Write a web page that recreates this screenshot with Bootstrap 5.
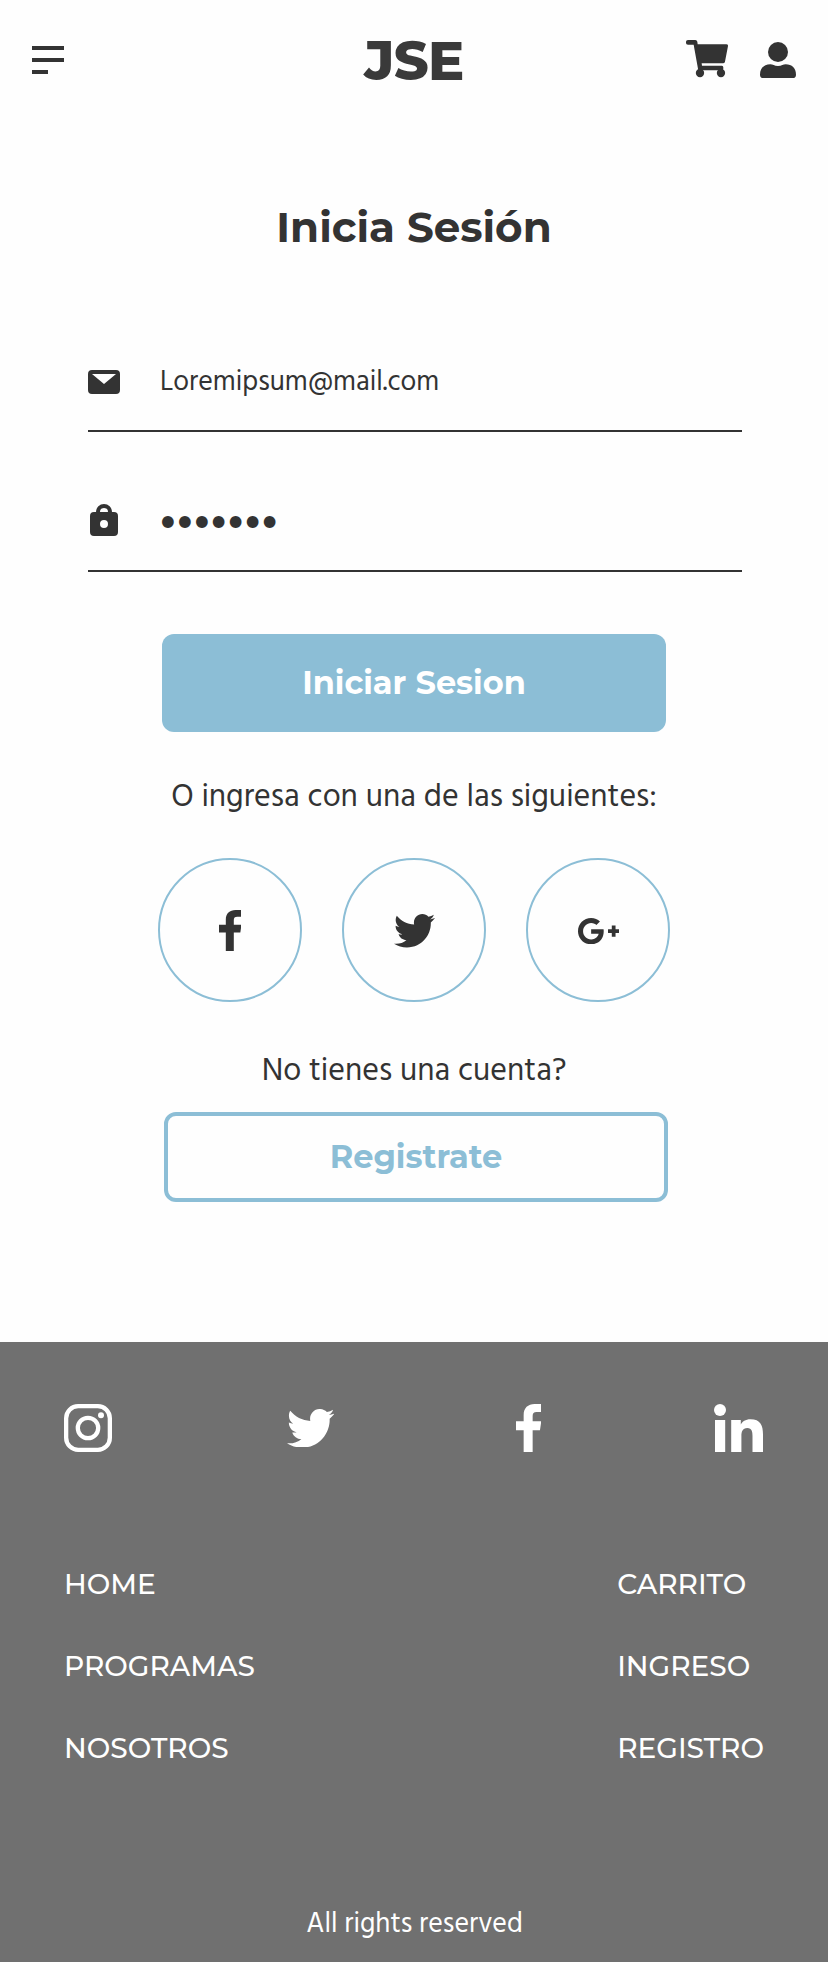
<!DOCTYPE html>
<html lang="es">
<head>
<meta charset="utf-8">
<meta name="viewport" content="width=device-width, initial-scale=1">
<title>JSE - Inicia Sesión</title>
<link href="https://cdn.jsdelivr.net/npm/bootstrap@5.3.0/dist/css/bootstrap.min.css" rel="stylesheet">
<style>
:root{--ink:#333;--sky:#8cbed6;--ash:#707070}
body{font-family:Hind,"Noto Sans",sans-serif;color:var(--ink);background:#fefefe}
svg{display:block;fill:currentColor}
a{color:inherit;text-decoration:none}
.topbar{height:120px;padding:0 32px}
.side{width:110px}
.cart{margin-top:-2px}
.brand{font:800 54px/60px Montserrat,Inter,sans-serif;letter-spacing:-.6px;color:#3a3a3a;padding-top:1px}
.heading{font:700 42px/50px Montserrat,Inter,sans-serif;margin:82px 0 0}
.field{width:654px;margin-left:2px;border-bottom:2px solid var(--ink);font-size:28px}
.field-mail{height:98px;margin-top:82px}
.field-pass{height:102px;margin-top:38px}
.glyph{width:32px;margin-right:40px}
.mail{padding-top:2px}
.dots{font-size:44px;line-height:1;letter-spacing:-2.8px;margin:14px 0 0 -2px}
.action{width:504px;border-radius:12px;font:700 32px/1 Montserrat,Inter,sans-serif;padding:0}
.action-main{height:98px;margin-top:62px;background:var(--sky);color:#fff}
.action-alt{height:90px;margin:20px 0 0 4px;border:4px solid var(--sky);color:var(--sky)}
.note{font-size:32px;line-height:40px}
.note-or{margin-top:46px}
.note-new{margin-top:50px}
.rings{margin-top:40px;gap:40px}
.ring{width:144px;height:144px;border:2px solid var(--sky)}
.nudge{padding:2px 0 0 1px}
.foot{margin-top:140px;padding:62px 64px 17px;background:var(--ash);height:620px}
.social{height:48px}
.s-tw{margin-left:174.7px}
.s-fb{margin-left:181.5px}
.s-in{margin-left:173px}
.links{margin-top:91px;font:500 28px/82px Montserrat,Inter,sans-serif}
.copy{margin-top:116px;padding-left:1px;font-size:28px;line-height:40px}
</style>
</head>
<body>
<header class="topbar d-flex align-items-center justify-content-between">
  <a href="#" class="side" aria-label="Menú"><svg width="32" height="28"><path d="M0 0h32v4H0zM0 12h32v4H0zM0 24h16v4H0z"/></svg></a>
  <a href="#" class="brand">JSE</a>
  <div class="side d-flex justify-content-between align-items-center">
    <a href="#" class="cart" aria-label="Carrito"><svg width="42.3" height="37.3" viewBox="0 0 127 112"><path d="M6 0H28Q33 0 34 5L35 13H121Q127 13 126 19L117 65Q116 70 111 70H47L48 77H108Q112 77 112 82V86Q112 91 107 91H42Q37 91 36 86L23 14H6Q0 14 0 9V5Q0 0 6 0Z"/><circle cx="42" cy="99" r="12.5"/><circle cx="105" cy="99" r="12.5"/></svg></a>
    <a href="#" aria-label="Cuenta"><svg width="36" height="36" viewBox="0 0 108 108"><circle cx="54" cy="30" r="30"/><path d="M0 98C0 79 12 67 31 67C38 67 43 72 54 72S70 67 77 67C96 67 108 79 108 98Q108 108 98 108H10Q0 108 0 98Z"/></svg></a>
  </div>
</header>
<main class="d-flex flex-column align-items-center">
  <h1 class="heading">Inicia Sesión</h1>
  <div class="field field-mail d-flex align-items-center">
    <span class="glyph"><svg width="32" height="24"><path fill-rule="evenodd" d="M4 0H28Q32 0 32 4V20Q32 24 28 24H4Q0 24 0 20V4Q0 0 4 0ZM4 4L16 14L28 4Z"/></svg></span>
    <span class="mail">Loremipsum@mail.com</span>
  </div>
  <div class="field field-pass d-flex align-items-center">
    <span class="glyph"><svg width="32" height="32"><path fill-rule="evenodd" d="M6 8H8A8 8 0 0 1 24 8H26Q30 8 30 12V28Q30 32 26 32H6Q2 32 2 28V12Q2 8 6 8ZM12 8H20A4 4 0 0 0 12 8ZM16 16A4 4 0 1 0 16 24A4 4 0 1 0 16 16Z"/></svg></span>
    <span class="dots">•••••••</span>
  </div>
  <button class="btn action action-main" type="button">Iniciar Sesion</button>
  <p class="note note-or mb-0">O ingresa con una de las siguientes:</p>
  <div class="rings d-flex">
    <a href="#" class="ring rounded-circle d-flex align-items-center justify-content-center" aria-label="Facebook"><svg width="22.5" height="41" viewBox="0 0 76 144" preserveAspectRatio="none"><path d="M76 0V24H62C53 24 50 28 50 36V52H76L72 79H50V144H23V79H0V52H23V33C23 12 36 0 56 0Z"/></svg></a>
    <a href="#" class="ring nudge rounded-circle d-flex align-items-center justify-content-center" aria-label="Twitter"><svg width="41" height="33.5" viewBox="0 2.25 24 19.5"><path id="bird" d="M23.954 4.569c-.885.389-1.83.654-2.825.775 1.014-.611 1.794-1.574 2.163-2.723-.951.555-2.005.959-3.127 1.184-.896-.959-2.173-1.559-3.591-1.559-2.717 0-4.92 2.203-4.92 4.917 0 .39.045.765.127 1.124C7.691 8.094 4.066 6.13 1.64 3.161c-.427.722-.666 1.561-.666 2.475 0 1.71.87 3.213 2.188 4.096-.807-.026-1.566-.248-2.228-.616v.061c0 2.385 1.693 4.374 3.946 4.827-.413.111-.849.171-1.296.171-.314 0-.615-.03-.916-.086.631 1.953 2.445 3.377 4.604 3.417-1.68 1.319-3.809 2.105-6.102 2.105-.39 0-.779-.023-1.17-.067 2.189 1.394 4.768 2.209 7.557 2.209 9.054 0 13.999-7.496 13.999-13.986 0-.209 0-.42-.015-.63.961-.689 1.8-1.56 2.46-2.548z"/></svg></a>
    <a href="#" class="ring nudge rounded-circle d-flex align-items-center justify-content-center" aria-label="Google Plus"><svg width="41.3" height="26.3" viewBox="1 5 22 14"><path d="M23 11H21V9H19V11H17V13H19V15H21V13H23ZM8 11V13.4H12C11.8 14.4 10.8 16.4 8 16.4C5.6 16.4 3.7 14.4 3.7 12C3.7 9.6 5.6 7.6 8 7.6C9.4 7.6 10.3 8.2 10.8 8.7L12.7 6.9C11.5 5.7 9.9 5 8 5C4.1 5 1 8.1 1 12C1 15.9 4.1 19 8 19C12 19 14.7 16.2 14.7 12.2C14.7 11.7 14.7 11.4 14.6 11Z"/></svg></a>
  </div>
  <p class="note note-new mb-0">No tienes una cuenta?</p>
  <button class="btn action action-alt" type="button">Registrate</button>
</main>
<footer class="foot text-white">
  <div class="social d-flex align-items-center">
    <svg width="48" height="48"><g fill="none" stroke="currentColor" stroke-width="4.3"><rect x="2.15" y="2.15" width="43.7" height="43.7" rx="12"/><circle cx="24" cy="24" r="10.2"/></g><circle cx="37" cy="11.2" r="3"/></svg>
    <svg class="s-tw" width="47.5" height="38.6" viewBox="0 2.25 24 19.5"><use href="#bird"/></svg>
    <svg class="s-fb" width="25.3" height="48" viewBox="0 0 76 144"><path d="M76 0V24H62C53 24 50 28 50 36V52H76L72 79H50V144H23V79H0V52H23V33C23 12 36 0 56 0Z"/></svg>
    <svg class="s-in" width="49" height="48"><circle cx="6" cy="6" r="6"/><path d="M1 16H11.2V48H1ZM17.2 16H26.8V20.4C28.2 17.6 31.5 15.2 36.4 15.2C46.5 15.2 49 21.5 49 30.4V48H38.5V32C38.5 28 38 24 33.3 24C28.5 24 27.4 27.8 27.4 32V48H17.2Z"/></svg>
  </div>
  <div class="links d-flex justify-content-between">
    <div class="d-flex flex-column"><a href="#">HOME</a><a href="#">PROGRAMAS</a><a href="#">NOSOTROS</a></div>
    <div class="d-flex flex-column"><a href="#">CARRITO</a><a href="#">INGRESO</a><a href="#">REGISTRO</a></div>
  </div>
  <p class="copy text-center mb-0">All rights reserved</p>
</footer>
<script src="https://cdn.jsdelivr.net/npm/bootstrap@5.3.0/dist/js/bootstrap.bundle.min.js"></script>
</body>
</html>
